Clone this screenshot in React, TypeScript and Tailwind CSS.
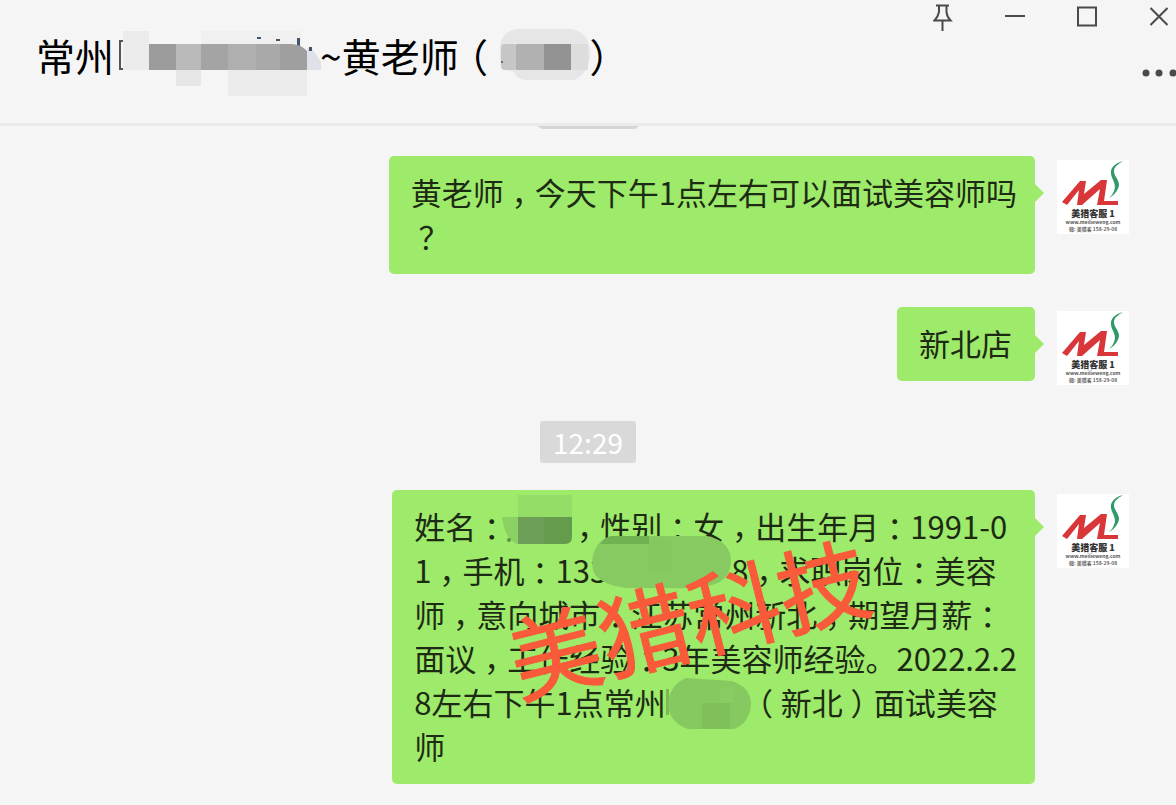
import type { ReactNode } from "react";

const fontStack = "font-['Noto_Sans_CJK_SC','Liberation_Sans',sans-serif]";

// Full-width marks sit in the middle of their cell, not in its corner.
function Cjk({ children }: { children: string }) {
  return (
    <span>
      {children.split(/([，：（）？])/).map((part, i) =>
        /^[，：（）？]$/.test(part) ? (
          <span key={i} className="inline-block w-[1em] text-center [font-feature-settings:'halt']">
            {part}
          </span>
        ) : (
          part
        ),
      )}
    </span>
  );
}

function Line({ children }: { children: ReactNode }) {
  return <span className="flex h-11 items-center whitespace-pre">{children}</span>;
}

function Logo() {
  return (
    <svg viewBox="0 0 72 74" className="mt-1 h-[74px] w-[72px] shrink-0 bg-white" role="img" aria-label="美猎客服1">
      <path d="M5 42L23 21H29L27 34L44 20H50L47 41H61V45H40L43 29L25 45H20L22 30L10 45Z" fill="#d9363a" />
      <path
        d="M66 1 C58 3 53 8 54 14 C55 20 60 24 57 31 C56 34 54 36 52 38 C58 35 62 29 62 24 C61 18 57 16 57 11 C57 7 61 4 66 1 Z"
        fill="#2f9a68"
      />
      <text x="36" y="57" textAnchor="middle" fontSize="9" fontWeight="900" fill="#333">
        美猎客服 1
      </text>
      <text x="36" y="64" textAnchor="middle" fontSize="5" fontWeight="700" fill="#555">
        www.meilieweng.com
      </text>
      <text x="36" y="71" textAnchor="middle" fontSize="5" fontWeight="700" fill="#666">
        微: 美猎客 158-29-08
      </text>
    </svg>
  );
}

type MessageProps = { children: ReactNode; wide?: boolean; className?: string };

function Message({ children, wide = false, className = "" }: MessageProps) {
  return (
    <li className={`flex items-start justify-end gap-[22px] pr-[47px] ${className}`}>
      <div
        className={`relative rounded-[5px] bg-[#9eea6a] pt-[14px] pb-4 pl-[22px] text-[31px] leading-[44px] text-[#1d2b14] ${
          wide ? "pr-[18px]" : "pr-[23px]"
        }`}
      >
        {children}
        <svg viewBox="0 0 10 20" className="absolute top-[27px] -right-[9px] h-5 w-2.5" fill="#9eea6a" aria-hidden>
          <path d="M0 0 L10 10 L0 20 Z" />
        </svg>
      </div>
      <Logo />
    </li>
  );
}

function NameMask() {
  return (
    <span className="relative h-[52px] w-[206px] shrink-0">
      <svg viewBox="0 0 210 72" className="absolute top-0 -left-px h-[72px] w-[210px]" aria-hidden>
        <path d="M6 9h4v2H8v26h2v2H6z" fill="#555" />
        <rect x="10" y="0" width="26" height="39" fill="#ebebeb" />
        <rect x="88" y="0" width="100" height="13" fill="#f0f0f0" />
        <rect x="36" y="13" width="27" height="26" fill="#9b9b9b" />
        <rect x="63" y="13" width="25" height="26" fill="#b9b9b9" />
        <rect x="88" y="13" width="27" height="26" fill="#a4a4a4" />
        <rect x="115" y="13" width="28" height="26" fill="#afafaf" />
        <rect x="143" y="13" width="24" height="26" fill="#a9a9a9" />
        <path d="M167 13h12q10 1 15 7v19h-27z" fill="#9f9f9f" />
        <path d="M194 17l6 2l8 12v8h-14z" fill="#dee1e7" />
        <rect x="63" y="39" width="25" height="16" fill="#e6e6e6" />
        <rect x="115" y="39" width="79" height="26" fill="#ebebeb" />
        <path d="M144 6h4v2h-4zM163 8h4v2h-4zM184 7h3v8l-3-1zM196 16h3v4h-3z" fill="#41566a" />
      </svg>
    </span>
  );
}

function CodeMask() {
  return (
    <span className="relative h-[52px] w-[82px] shrink-0">
      <svg viewBox="0 0 92 54" className="absolute -top-1 left-0.5 h-[54px] w-[92px]" aria-hidden>
        <path d="M16 2h56q18 4 18 24t-16 27H24q-8-2-10-8Q0 42 0 32V18Q2 6 16 2z" fill="#e6e6e6" />
        <rect x="1" y="17" width="16" height="26" rx="4" fill="#c6c6c6" />
        <rect x="16" y="17" width="28" height="26" fill="#b1b1b1" />
        <rect x="44" y="17" width="27" height="26" fill="#939393" />
        <rect x="71" y="17" width="17" height="26" fill="#dddddd" />
        <circle cx="2" cy="35" r="1" fill="#555" />
      </svg>
    </span>
  );
}

function App() {
  return (
    <main className={`min-h-screen overflow-hidden bg-[#f5f5f5] ${fontStack}`}>
      <header className="border-b-[3px] border-[#ebebeb] pb-10 text-[#4a4a4a]">
        <div className="flex h-[31px] justify-end gap-[52px] pr-[7px]">
          <button type="button" aria-label="置顶" className="h-8 w-5">
            <svg viewBox="0 0 20 32" className="h-8 w-5" fill="none" stroke="currentColor" strokeWidth="2">
              <path d="M3 5.500H16M6 6V12Q5 17 1.500 20.500H17.500Q14 17 13.500 12V6M9.500 21V31" />
            </svg>
          </button>
          <button type="button" aria-label="最小化" className="h-8 w-5">
            <svg viewBox="0 0 20 32" className="h-8 w-5" stroke="currentColor" strokeWidth="2">
              <path d="M0 16H20" />
            </svg>
          </button>
          <button type="button" aria-label="最大化" className="h-8 w-5">
            <svg viewBox="0 0 20 32" className="h-8 w-5" fill="none" stroke="currentColor" strokeWidth="2">
              <path d="M1 7.500H19V25.500H1Z" />
            </svg>
          </button>
          <button type="button" aria-label="关闭" className="h-8 w-5">
            <svg viewBox="0 0 20 32" className="h-8 w-5" stroke="currentColor" strokeWidth="2">
              <path d="M1.500 8L18.500 25M18.500 8L1.500 25" />
            </svg>
          </button>
        </div>
        <div className="flex items-start justify-between pl-9">
          <h1 className="flex h-[52px] items-start text-[39px] leading-[48px] whitespace-pre text-black">
            <Cjk>常州</Cjk>
            <NameMask />
            <Cjk>~黄老师（</Cjk>
            <CodeMask />
            <Cjk>）</Cjk>
          </h1>
          <button type="button" aria-label="更多" className="mt-9 h-3 w-[34px]">
            <svg viewBox="0 0 34 12" className="h-3 w-[34px]" fill="currentColor">
              <circle cx="4" cy="6" r="3.500" />
              <circle cx="17" cy="6" r="3.500" />
              <circle cx="31" cy="6" r="3.500" />
            </svg>
          </button>
        </div>
      </header>

      <svg viewBox="0 0 102 5" className="mx-auto -mt-0.5 block h-[5px] w-[102px]" fill="#d6d6d6" aria-hidden>
        <path d="M0 2H102L98 5H5Z" />
      </svg>

      <ul className="pt-[27px]">
        <Message wide>
          <Line>
            <Cjk>黄老师，今天下午1点左右可以面试美容师吗</Cjk>
          </Line>
          <Line>
            <Cjk>？</Cjk>
          </Line>
        </Message>

        <Message className="mt-[33px]">
          <Line>
            <Cjk>新北店</Cjk>
          </Line>
        </Message>

        <li className="mt-9 mb-[27px] flex justify-center">
          <time className="rounded-[3px] bg-[#d9d9d9] px-[13px] text-[28px] leading-[42px] text-white">12:29</time>
        </li>

        <Message wide>
          <Line>
            <Cjk>姓名：</Cjk>
            <span className="relative h-11 w-[62px] shrink-0">
              <svg viewBox="0 0 74 52" className="absolute -top-[9px] -left-1.5 h-[52px] w-[74px]" aria-hidden>
                <rect x="17" y="0" width="54" height="22" fill="#94de68" />
                <path d="M1 22h16v27Q4 46 1 22z" fill="#8ad062" />
                <path d="M17 22h54v20q0 7-7 7H17z" fill="#659b4d" />
                <path d="M17 22h26v27H17z" fill="#6d9f58" />
                <circle cx="8" cy="45" r="2" fill="#5d913f" />
              </svg>
            </span>
            <Cjk>，性别：女，出生年月：1991-0</Cjk>
          </Line>
          <Line>
            <Cjk>1，手机：133</Cjk>
            <span className="relative h-11 w-[124px] shrink-0">
              <svg viewBox="0 0 142 54" className="absolute -top-[13px] -left-4 h-[54px] w-[142px]" aria-hidden>
                <path
                  d="M22 1H116Q140 6 140 27Q138 48 116 51Q98 54 76 53H36Q10 50 3 38Q-3 20 10 6Q15 2 22 1z"
                  fill="#87ca61"
                />
                <path d="M20 1H58V9H9Q13 3 20 1z" fill="#70b151" />
                <path d="M58 3h22v34H58z" fill="#85c85f" />
              </svg>
            </span>
            <Cjk>8，求职岗位：美容</Cjk>
          </Line>
          <Line>
            <Cjk>师，意向城市：江苏常州新北，期望月薪：</Cjk>
          </Line>
          <Line>
            <Cjk>面议，工作经验：3年美容师经验。2022.2.2</Cjk>
          </Line>
          <Line>
            <Cjk>8左右下午1点常州</Cjk>
            <span className="relative h-11 w-[84px] shrink-0">
              <svg viewBox="0 0 86 54" className="absolute -top-[3px] left-0 h-[54px] w-[86px]" aria-hidden>
                <path d="M0 12h3v26H0z" fill="#79b956" />
                <path d="M20 1L66 4Q84 10 85 26Q84 46 68 52H22Q4 46 2 28Q3 8 20 1z" fill="#86c960" />
                <path d="M36 26h28v26H36z" fill="#7fc05a" />
                <path d="M54 10h14v16H54z" fill="#8acc62" />
              </svg>
            </span>
            <Cjk>（新北）面试美容</Cjk>
          </Line>
          <Line>
            <Cjk>师</Cjk>
          </Line>
          <span className="pointer-events-none absolute top-[79px] left-28 -rotate-14 text-[92px] leading-[92px] whitespace-nowrap text-[#f95a3a] [-webkit-text-stroke:1px_#f95a3a]">
            美猎科技
          </span>
        </Message>
      </ul>
    </main>
  );
}

export default App;
